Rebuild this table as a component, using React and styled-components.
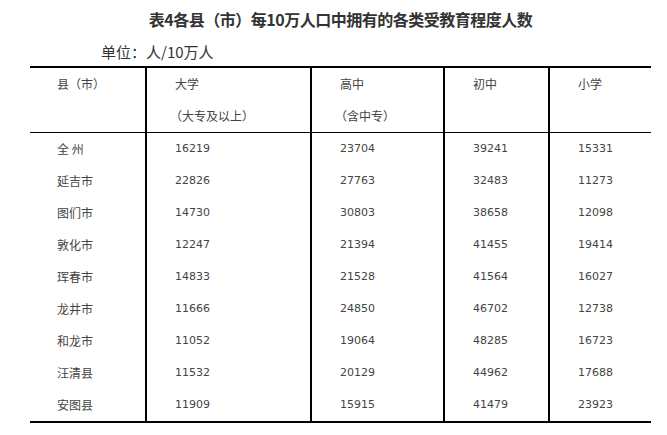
import React from "react";
import styled, { createGlobalStyle } from "styled-components";

const GlobalStyle = createGlobalStyle`
	body {
		margin: 0;
		background: #fff;
		color: #333;
		font-family: "Noto Sans CJK SC", "Noto Sans", sans-serif;
	}
`;

const rows = [
	["全 州", "16219", "23704", "39241", "15331"],
	["延吉市", "22826", "27763", "32483", "11273"],
	["图们市", "14730", "30803", "38658", "12098"],
	["敦化市", "12247", "21394", "41455", "19414"],
	["珲春市", "14833", "21528", "41564", "16027"],
	["龙井市", "11666", "24850", "46702", "12738"],
	["和龙市", "11052", "19064", "48285", "16723"],
	["汪清县", "11532", "20129", "44962", "17688"],
	["安图县", "11909", "15915", "41479", "23923"],
];

const heads = [
	["县（市）"],
	["大学", "（大专及以上）"],
	["高中", "（含中专）"],
	["初中"],
	["小学"],
];

export default function App() {
	return (
		<>
			<GlobalStyle />
			<Page>
				<Title>表4各县（市）每10万人口中拥有的各类受教育程度人数</Title>
				<Unit>单位：人/10万人</Unit>
				<Table>
					<Row $head>
						{heads.map((lines, i) => (
							<Cell key={i}>
								{lines.map((l, j) => <Line key={l} $note={j > 0}>{l}</Line>)}
							</Cell>
						))}
					</Row>
					{rows.map(r => (
						<Row key={r[0]}>
							{r.map((v, i) => (
								<Cell key={i} $num={i > 0}>{v}</Cell>
							))}
						</Row>
					))}
				</Table>
			</Page>
		</>
	);
}

const Page = styled.div`
	width: 621px;
	padding-left: 30px;
`;

const Title = styled.h1`
	margin: 0;
	padding-top: 8px;
	font-size: 16px;
	line-height: 22px;
	font-weight: bold;
	letter-spacing: -0.5px;
	text-align: center;
	color: #333;
`;

const Unit = styled.p`
	margin: 0;
	padding: 11px 0 0 71px;
	font-size: 15px;
	line-height: 22px;
	color: #333;
`;

const Table = styled.div`
	margin-top: 3px;
	border-top: 2px solid #000;
	border-bottom: 2px solid #000;
`;

const Row = styled.div`
	display: grid;
	grid-template-columns: 115px 165px 133px 105px 103px;
	border-bottom: ${p => (p.$head ? "1px solid #000" : "none")};
`;

const Cell = styled.div`
	padding-left: 28px;
	border-left: 2px solid #000;
	line-height: 32px;
	font-size: ${p => (p.$num ? "11px" : "12px")};
	font-family: ${p => (p.$num ? '"DejaVu Sans", sans-serif' : '"Noto Sans CJK SC", sans-serif')};
	color: #444;
	white-space: nowrap;

	&:first-child {
		border-left: none;
		padding-left: 27px;
	}
`;

const Line = styled.div`
	height: 32px;
	margin-left: ${p => (p.$note ? "-5px" : "0")};
`;
